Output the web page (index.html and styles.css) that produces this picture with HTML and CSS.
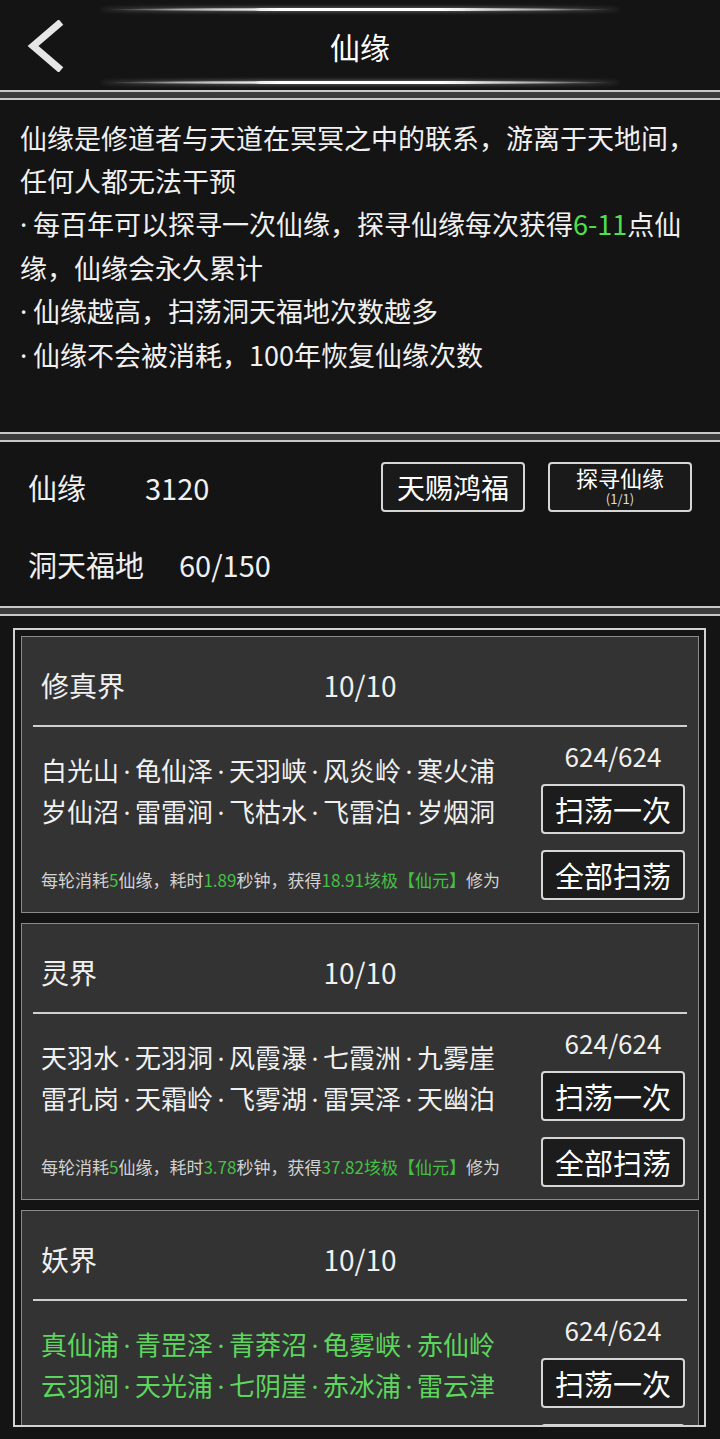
FILE: index.html
```html
<!DOCTYPE html>
<html lang="zh-CN">
<head>
	<meta charset="UTF-8">
	<title>仙缘</title>
	<link rel="stylesheet" href="styles.css">
</head>
<body>

<div class="page">
	<!--顶部标题-->
	<div class="hd">
		<i class="glow"></i>
		<div class="hd_row">
			<a href="javascript:;" class="back">
				<svg width="40" height="52" viewBox="0 0 40 52"><polyline points="35,2 7,26 35,50" fill="none" stroke="#e6e6e6" stroke-width="7" stroke-linejoin="miter"/></svg>
			</a>
			<h1>仙缘</h1>
			<span></span>
		</div>
		<i class="glow"></i>
	</div>

	<!--说明-->
	<div class="panel desc">
		<p>仙缘是修道者与天道在冥冥之中的联系，游离于天地间，任何人都无法干预</p>
		<p><i class="dot">·</i>每百年可以探寻一次仙缘，探寻仙缘每次获得<em>6-11</em>点仙缘，仙缘会永久累计</p>
		<p><i class="dot">·</i>仙缘越高，扫荡洞天福地次数越多</p>
		<p><i class="dot">·</i>仙缘不会被消耗，100年恢复仙缘次数</p>
	</div>

	<!--数值-->
	<div class="panel stats">
		<div class="stat_row">
			<span class="stat_name">仙缘</span>
			<span class="stat_val">3120</span>
			<div class="stat_btns">
				<a href="javascript:;" class="btn btn_big">天赐鸿福</a>
				<a href="javascript:;" class="btn btn_two">探寻仙缘<small>(1/1)</small></a>
			</div>
		</div>
		<div class="stat_row stat_row2">
			<span class="stat_name">洞天福地</span>
			<span class="stat_val">60/150</span>
		</div>
	</div>

	<!--洞天福地列表-->
	<div class="panel list">
		<div class="frame">
			<div class="card">
				<div class="card_hd"><span>修真界</span><span class="card_cnt">10/10</span><span></span></div>
				<div class="card_bd">
					<div class="card_l">
						<div class="places">
							<div><span>白光山</span><span>龟仙泽</span><span>天羽峡</span><span>风炎岭</span><span>寒火浦</span></div>
							<div><span>岁仙沼</span><span>雷雷涧</span><span>飞枯水</span><span>飞雷泊</span><span>岁烟洞</span></div>
						</div>
						<p class="cost">每轮消耗<em>5</em>仙缘，耗时<em>1.89</em>秒钟，获得<em>18.91垓极【仙元】</em>修为</p>
					</div>
					<div class="card_r">
						<p class="times">624/624</p>
						<a href="javascript:;" class="btn sweep">扫荡一次</a>
						<a href="javascript:;" class="btn sweep sweep_all">全部扫荡</a>
					</div>
				</div>
			</div>
			<div class="card">
				<div class="card_hd"><span>灵界</span><span class="card_cnt">10/10</span><span></span></div>
				<div class="card_bd">
					<div class="card_l">
						<div class="places">
							<div><span>天羽水</span><span>无羽洞</span><span>风霞瀑</span><span>七霞洲</span><span>九雾崖</span></div>
							<div><span>雷孔岗</span><span>天霜岭</span><span>飞雾湖</span><span>雷冥泽</span><span>天幽泊</span></div>
						</div>
						<p class="cost">每轮消耗<em>5</em>仙缘，耗时<em>3.78</em>秒钟，获得<em>37.82垓极【仙元】</em>修为</p>
					</div>
					<div class="card_r">
						<p class="times">624/624</p>
						<a href="javascript:;" class="btn sweep">扫荡一次</a>
						<a href="javascript:;" class="btn sweep sweep_all">全部扫荡</a>
					</div>
				</div>
			</div>
			<div class="card">
				<div class="card_hd"><span>妖界</span><span class="card_cnt">10/10</span><span></span></div>
				<div class="card_bd">
					<div class="card_l">
						<div class="places places_on">
							<div><span>真仙浦</span><span>青罡泽</span><span>青莽沼</span><span>龟雾峡</span><span>赤仙岭</span></div>
							<div><span>云羽涧</span><span>天光浦</span><span>七阴崖</span><span>赤冰浦</span><span>雷云津</span></div>
						</div>
						<p class="cost">每轮消耗<em>5</em>仙缘，耗时<em>7.56</em>秒钟，获得<em>75.64垓极【仙元】</em>修为</p>
					</div>
					<div class="card_r">
						<p class="times">624/624</p>
						<a href="javascript:;" class="btn sweep">扫荡一次</a>
						<a href="javascript:;" class="btn sweep sweep_all">全部扫荡</a>
					</div>
				</div>
			</div>
		</div>
	</div>
</div>

</body>
</html>
```

FILE: styles.css
```css
*{margin:0; padding:0; box-sizing:border-box;}
body{ background:#3c3c3c; font-family:"Noto Sans CJK SC", "Noto Sans", sans-serif; color:#f0f0f0; }
a{ color:inherit; text-decoration:none; }
em,i{ font-style:normal; }
.page{ width:720px; height:1439px; overflow:hidden; }

/*顶部*/
.hd{ height:92px; background:#141414; border-bottom:2px solid #c8c8c8; padding-top:8px; }
.glow{ display:block; width:520px; height:3px; margin:0 auto; background:linear-gradient(to right, rgba(255,255,255,0), #aaa 15%, #fff 35%, #fff 65%, #aaa 85%, rgba(255,255,255,0)); box-shadow:0 0 4px rgba(255,255,255,.5); border-radius:50%; }
.hd_row{ display:grid; grid-template-columns:1fr auto 1fr; align-items:center; height:70px; }
.back{ display:block; width:40px; height:52px; margin-left:26px; }
.back svg{ display:block; }
.hd_row h1{ font-size:30px; font-weight:normal; line-height:40px; color:#fff; }

/*面板*/
.panel{ background:#141414; border-top:2px solid #c8c8c8; border-bottom:2px solid #c8c8c8; margin-top:6px; }

.desc{ height:336px; padding:16px 20px 0 20px; font-size:27px; line-height:43px; }
.desc em{ color:#4fe04f; }
.dot{ display:inline-block; width:13px; font-family:"Noto Sans", sans-serif; }

.stats{ height:168px; padding:20px 28px 0 28px; font-size:29px; }
.stat_row{ display:flex; align-items:center; height:50px; }
.stat_name{ line-height:40px; }
.stat_val{ margin-left:59px; line-height:40px; }
.stat_row2{ margin-top:32px; height:40px; }
.stat_row2 .stat_val{ margin-left:35px; }
.stat_btns{ display:flex; margin-left:auto; gap:23px; }

.btn{ display:flex; flex-direction:column; align-items:center; justify-content:center; width:144px; height:50px; border:2px solid #d6d6d6; border-radius:4px; background:#1a1a1a; color:#fff; }
.btn_big{ font-size:28px; line-height:36px; }
.btn_two{ justify-content:flex-start; padding-top:1px; font-size:22px; line-height:25px; }
.btn_two small{ font-size:13px; line-height:17px; color:#ddd; }

/*列表*/
.list{ border-bottom:0; height:825px; padding:12px 14px 12px 13px; }
.frame{ height:799px; border:2px solid #d2d2d2; padding:6px 5px 0 6px; overflow:hidden; }
.card{ background:#333; border:1px solid #8a8a8a; margin-bottom:10px; }
.card_hd{ display:grid; grid-template-columns:1fr auto 1fr; margin:0 11px; padding:28px 8px 20px 8px; border-bottom:2px solid #d0d0d0; font-size:28px; line-height:40px; }
.card_bd{ display:flex; padding:13px 13px 12px 19px; }
.card_l{ flex:1; display:flex; flex-direction:column; }
.places{ margin-top:10px; font-size:26px; line-height:39px; white-space:nowrap; }
.places span + span::before{ content:"·"; display:inline-block; width:16px; text-align:center; font-family:"Noto Sans", sans-serif; }
.places_on{ color:#5cd65c; }
.cost{ margin-top:auto; margin-bottom:10px; font-size:17px; line-height:20px; color:#d2d2d2; white-space:nowrap; }
.cost em{ color:#45c045; }
.card_r{ width:144px; display:flex; flex-direction:column; align-items:center; }
.times{ font-size:26px; line-height:32px; }
.sweep{ margin-top:12px; font-size:29px; line-height:38px; background:#1c1c1c; }
.sweep_all{ margin-top:16px; }
```
